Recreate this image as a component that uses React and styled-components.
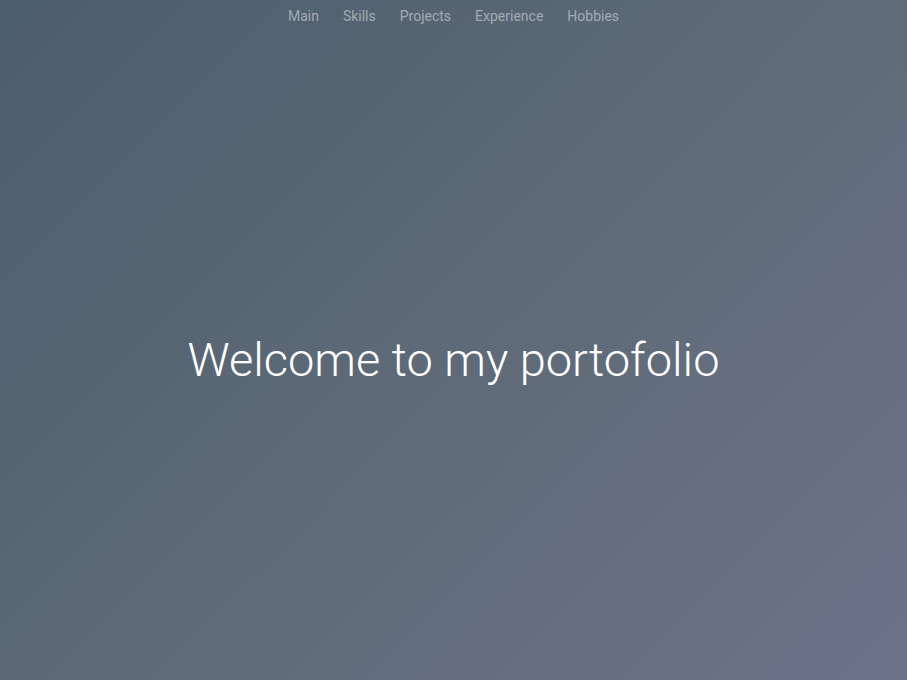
import styled, { createGlobalStyle } from 'styled-components'

const GlobalStyle = createGlobalStyle`
  html, body {
    margin: 0;
    padding: 0;
  }
  body {
    font-family: "Helvetica Neue", Roboto, "Liberation Sans", sans-serif;
  }
`

const links = ['Main', 'Skills', 'Projects', 'Experience', 'Hobbies']

export default function App() {
  return (
    <>
      <GlobalStyle />
      <Page>
        <Nav>
          {links.map((l) => (
            <NavLink key={l} href={'#' + l.toLowerCase()}>{l}</NavLink>
          ))}
        </Nav>
        <Hero>
          <Title>Welcome to my portofolio</Title>
        </Hero>
      </Page>
    </>
  )
}

const Page = styled.div`
  width: 100vw;
  height: 100vh;
  display: flex;
  flex-direction: column;
  background: linear-gradient(135deg, #4c5d6c 0%, #5e6a77 50%, #6c7389 100%);
  overflow: hidden;
`

const Nav = styled.nav`
  display: flex;
  justify-content: center;
  gap: 24px;
  padding-top: 8px;
  height: 24px;
`

const NavLink = styled.a`
  font-family: Roboto, "Liberation Sans", sans-serif;
  font-size: 14px;
  font-weight: 400;
  color: #a3abb4;
  text-decoration: none;
  line-height: 16px;
`

const Hero = styled.main`
  flex: 1;
  display: flex;
  justify-content: center;
  align-items: center;
  padding-top: 6px;
`

const Title = styled.h1`
  margin: 0;
  font-family: Roboto, "Liberation Sans", sans-serif;
  font-weight: 300;
  font-size: 47px;
  color: #ffffff;
  letter-spacing: 0;
`
